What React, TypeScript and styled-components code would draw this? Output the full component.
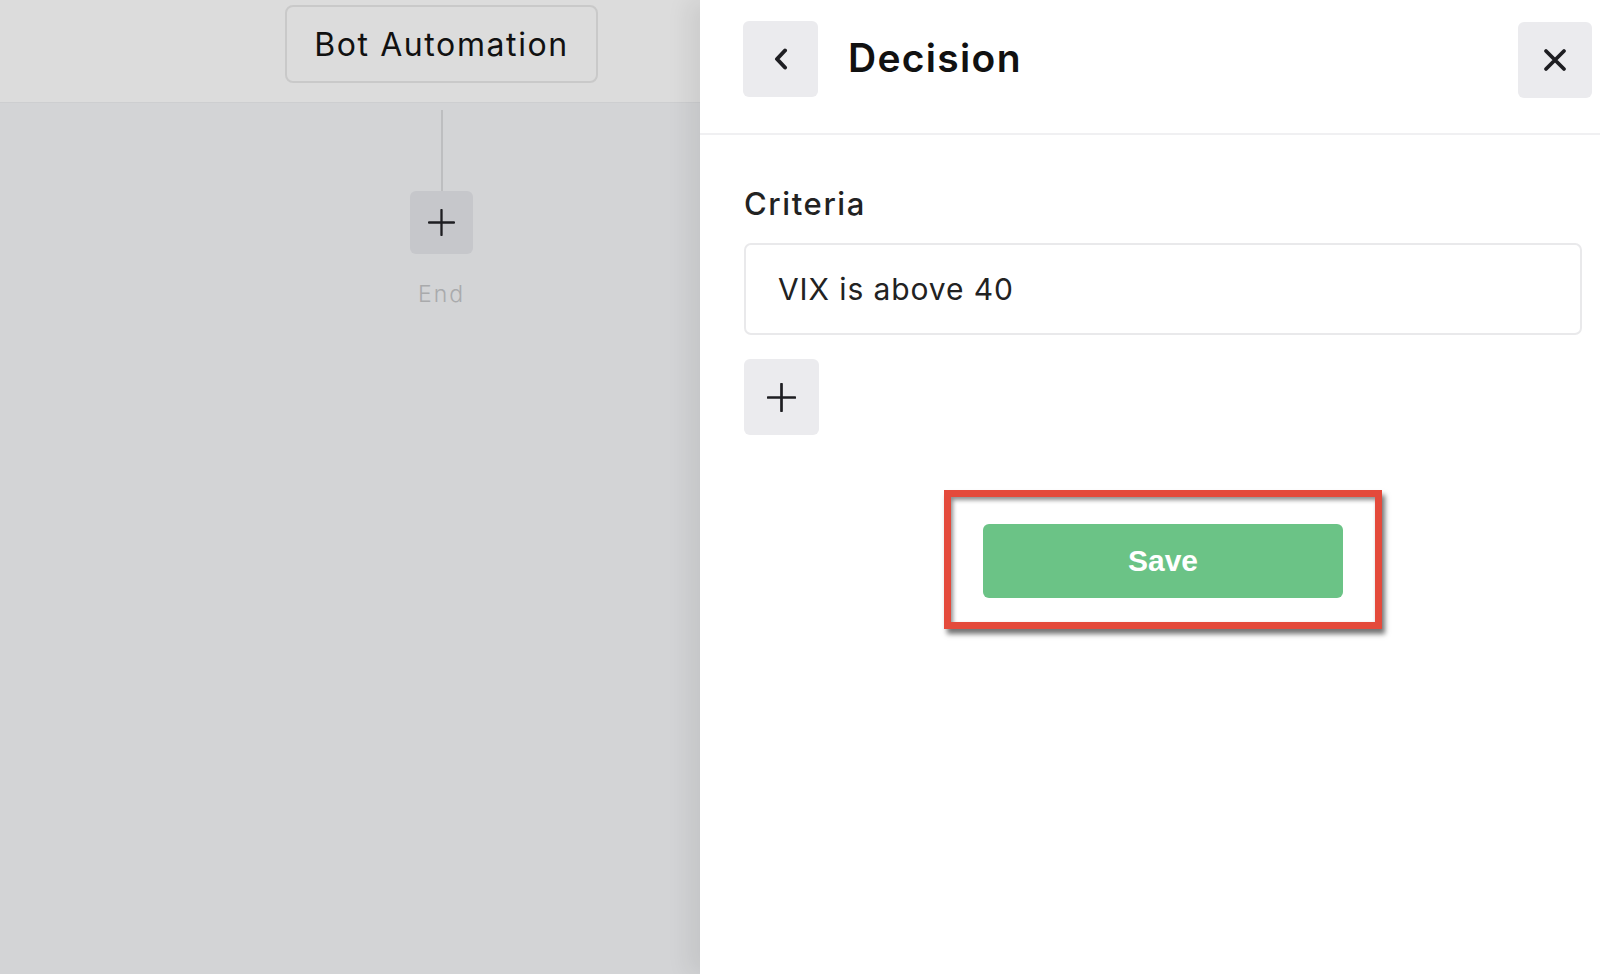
import React from "react";
import styled, { createGlobalStyle } from "styled-components";

const GlobalStyle = createGlobalStyle`
  html, body {
    margin: 0;
    padding: 0;
    height: 100%;
    overflow: hidden;
  }
  body {
    font-family: "Inter", "Noto Sans", sans-serif;
    color: #1d1d1f;
  }
  #root {
    height: 100%;
  }
`;

const Page = styled.div`
  display: flex;
  width: 1600px;
  height: 974px;
  overflow: hidden;
`;

// ---- left canvas (dimmed behind the drawer) ----

const Canvas = styled.div`
  width: 700px;
  flex-shrink: 0;
  background: #d3d4d6;
  display: flex;
  flex-direction: column;
`;

const CanvasHeader = styled.div`
  height: 103px;
  background: #dcdcdc;
  border-bottom: 1px solid #cdced0;
  padding: 5px 0 0 285px;
  box-sizing: border-box;
`;

const FlowColumn = styled.div`
  width: 313px;
  display: flex;
  flex-direction: column;
  align-items: center;
`;

const FlowBody = styled(FlowColumn)`
  margin-left: 285px;
  padding-top: 7px;
`;

const TitleChip = styled.div`
  width: 313px;
  height: 78px;
  box-sizing: border-box;
  border: 2px solid #c9c9c9;
  border-radius: 8px;
  display: flex;
  align-items: center;
  justify-content: center;
  font-size: 32px;
  font-weight: 400;
  letter-spacing: 1.6px;
  color: #111;
`;

const Connector = styled.div`
  width: 2px;
  height: 81px;
  background: #bdbec0;
`;

const IconButton = styled.button<{ $bg: string; $w: number; $h: number }>`
  width: ${(p) => p.$w}px;
  height: ${(p) => p.$h}px;
  border: none;
  border-radius: 6px;
  background: ${(p) => p.$bg};
  display: flex;
  align-items: center;
  justify-content: center;
  padding: 0;
  flex-shrink: 0;
  cursor: pointer;
`;

const EndLabel = styled.div`
  margin-top: 26px;
  font-size: 23px;
  font-weight: 300;
  letter-spacing: 2px;
  color: #a9aaac;
`;

// ---- right drawer ----

const Drawer = styled.div`
  flex: 1;
  background: #fff;
  box-shadow: -12px 0 22px rgba(0, 0, 0, 0.07);
  display: flex;
  flex-direction: column;
  position: relative;
`;

const DrawerHeader = styled.div`
  height: 135px;
  box-sizing: border-box;
  border-bottom: 2px solid #f0f0f2;
  display: flex;
  align-items: flex-start;
  padding: 21px 8px 0 43px;
`;

const Title = styled.h1`
  margin: 0 0 0 30px;
  flex: 1;
  font-size: 39px;
  font-weight: 600;
  line-height: 74px;
  letter-spacing: 1.3px;
  color: #111;
`;

const CloseWrap = styled.div`
  padding-top: 1px;
`;

const DrawerBody = styled.div`
  padding: 45px 18px 0 44px;
  display: flex;
  flex-direction: column;
`;

const FieldLabel = styled.label`
  font-size: 31px;
  font-weight: 500;
  line-height: 48px;
  letter-spacing: 1.6px;
  color: #222;
`;

const TextField = styled.div`
  margin-top: 15px;
  height: 92px;
  box-sizing: border-box;
  border: 2px solid #e9e9eb;
  border-radius: 7px;
  display: flex;
  align-items: center;
  padding-left: 32px;
  font-size: 30px;
  font-weight: 400;
  color: #222;
  letter-spacing: 0.9px;
`;

const AddRow = styled.div`
  margin-top: 24px;
  display: flex;
`;

const SaveRow = styled.div`
  margin-top: 55px;
  display: flex;
  justify-content: center;
`;

const Highlight = styled.div`
  width: 438px;
  height: 139px;
  box-sizing: border-box;
  border: 7px solid #e44a3b;
  box-shadow: 3px 5px 5px rgba(0, 0, 0, 0.55),
    inset 2px 3px 4px rgba(0, 0, 0, 0.45);
  display: flex;
  align-items: center;
  justify-content: center;
  background: #fff;
`;

const SaveButton = styled.button`
  width: 360px;
  height: 74px;
  margin-top: 2px;
  border: none;
  border-radius: 6px;
  background: #6bc386;
  color: #fff;
  font-family: "Liberation Sans", Arial, sans-serif;
  font-weight: 700;
  font-size: 30px;
  cursor: pointer;
`;

const PlusIcon = ({ size, stroke }: { size: number; stroke: number }) => (
  <svg width={size} height={size} viewBox="0 0 28 28">
    <path
      d="M14 1v26M1 14h26"
      stroke="#1e1e22"
      strokeWidth={stroke}
      strokeLinecap="round"
      fill="none"
    />
  </svg>
);

const ChevronLeft = () => (
  <svg width="16" height="22" viewBox="0 0 16 22">
    <path
      d="M12 2.5L4 11l8 8.5"
      stroke="#1e1e22"
      strokeWidth="4"
      strokeLinecap="round"
      strokeLinejoin="round"
      fill="none"
    />
  </svg>
);

const CloseIcon = () => (
  <svg width="24" height="24" viewBox="0 0 24 24">
    <path
      d="M3 3l18 18M21 3L3 21"
      stroke="#1e1e22"
      strokeWidth="3.8"
      strokeLinecap="round"
      fill="none"
    />
  </svg>
);

export default function App() {
  return (
    <>
      <GlobalStyle />
      <Page>
        <Canvas>
          <CanvasHeader>
            <FlowColumn>
              <TitleChip>Bot Automation</TitleChip>
            </FlowColumn>
          </CanvasHeader>
          <FlowBody>
            <Connector />
            <IconButton $bg="#c6c7cb" $w={63} $h={63}>
              <PlusIcon size={27} stroke={2.4} />
            </IconButton>
            <EndLabel>End</EndLabel>
          </FlowBody>
        </Canvas>

        <Drawer>
          <DrawerHeader>
            <IconButton $bg="#ebebee" $w={75} $h={76}>
              <ChevronLeft />
            </IconButton>
            <Title>Decision</Title>
            <CloseWrap>
              <IconButton $bg="#ebebee" $w={74} $h={76}>
                <CloseIcon />
              </IconButton>
            </CloseWrap>
          </DrawerHeader>

          <DrawerBody>
            <FieldLabel>Criteria</FieldLabel>
            <TextField>VIX is above 40</TextField>
            <AddRow>
              <IconButton $bg="#ebebee" $w={75} $h={76}>
                <PlusIcon size={29} stroke={2.6} />
              </IconButton>
            </AddRow>
            <SaveRow>
              <Highlight>
                <SaveButton>Save</SaveButton>
              </Highlight>
            </SaveRow>
          </DrawerBody>
        </Drawer>
      </Page>
    </>
  );
}
